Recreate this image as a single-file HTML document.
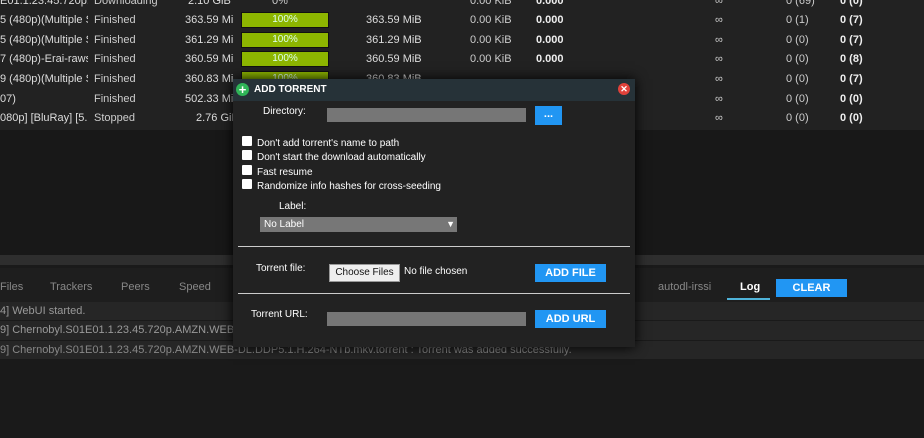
<!DOCTYPE html><html><head><style>
body{margin:0;width:924px;height:438px;overflow:hidden;background:#1a1a1a;font-family:"Liberation Sans",sans-serif;font-size:11px;color:#ccc;position:relative}
.a{position:absolute;white-space:nowrap}
.n{position:absolute;white-space:nowrap;left:0;width:88px;overflow:hidden;color:#ddd}
.bar{position:absolute;left:241px;width:86px;height:14px;background:#8db600;color:#dfe;text-align:center;line-height:14px;font-size:10px;border:1px solid #111}
.btn{position:absolute;background:#2196f3;color:#fff;font-weight:bold;text-align:center;font-size:11px}
.inp{position:absolute;background:#767676;height:14px}
.cb{position:absolute;width:10px;height:10px;background:#fff;border-radius:1px}
</style></head><body>
<div class="a" style="left:0;top:0;width:924px;height:130px;background:#222"></div>
<div class="a" style="left:0;top:130px;width:924px;height:125px;background:#181818"></div>
<div class="a" style="left:0;top:255px;width:924px;height:10px;background:#2e2e2e"></div>
<div class="a" style="left:0;top:268px;width:924px;height:34px;background:#1e1e1e"></div>
<div class="a" style="left:0;top:302px;width:924px;height:57px;background:#262626"></div>
<div class="a" style="left:0;top:320px;width:924px;height:1px;background:#1a1a1a"></div>
<div class="a" style="left:0;top:340px;width:924px;height:1px;background:#1a1a1a"></div>

<div class="n" style="top:-5px">E01.1.23.45.720p.Al</div><div class="a" style="left:94px;top:-5px">Downloading</div><div class="a" style="left:188px;top:-5px;color:#ddd">2.10 GiB</div><div class="a" style="left:272px;top:-5px">0%</div><div class="a" style="left:470px;top:-5px">0.00 KiB</div><div class="a" style="left:536px;top:-5px;font-weight:bold;color:#eee">0.000</div><div class="a" style="left:715px;top:-5px">∞</div><div class="a" style="left:786px;top:-5px">0 (69)</div><div class="a" style="left:840px;top:-5px;font-weight:bold;color:#eee">0 (0)</div>

<div class="n" style="top:14px">5 (480p)(Multiple Su</div><div class="a" style="left:94px;top:14px">Finished</div><div class="a" style="left:185px;top:14px;color:#ddd;width:48px;overflow:hidden">363.59 MiB</div><div class="bar" style="top:12px">100%</div><div class="a" style="left:366px;top:14px;color:#ddd">363.59 MiB</div><div class="a" style="left:470px;top:14px">0.00 KiB</div><div class="a" style="left:536px;top:14px;font-weight:bold;color:#eee">0.000</div><div class="a" style="left:715px;top:14px">∞</div><div class="a" style="left:786px;top:14px">0 (1)</div><div class="a" style="left:840px;top:14px;font-weight:bold;color:#eee">0 (7)</div>

<div class="n" style="top:34px">5 (480p)(Multiple Su</div><div class="a" style="left:94px;top:34px">Finished</div><div class="a" style="left:185px;top:34px;color:#ddd;width:48px;overflow:hidden">361.29 MiB</div><div class="bar" style="top:32px">100%</div><div class="a" style="left:366px;top:34px;color:#ddd">361.29 MiB</div><div class="a" style="left:470px;top:34px">0.00 KiB</div><div class="a" style="left:536px;top:34px;font-weight:bold;color:#eee">0.000</div><div class="a" style="left:715px;top:34px">∞</div><div class="a" style="left:786px;top:34px">0 (0)</div><div class="a" style="left:840px;top:34px;font-weight:bold;color:#eee">0 (7)</div>

<div class="n" style="top:53px">7 (480p)-Erai-raws[T</div><div class="a" style="left:94px;top:53px">Finished</div><div class="a" style="left:185px;top:53px;color:#ddd;width:48px;overflow:hidden">360.59 MiB</div><div class="bar" style="top:51px">100%</div><div class="a" style="left:366px;top:53px;color:#ddd">360.59 MiB</div><div class="a" style="left:470px;top:53px">0.00 KiB</div><div class="a" style="left:536px;top:53px;font-weight:bold;color:#eee">0.000</div><div class="a" style="left:715px;top:53px">∞</div><div class="a" style="left:786px;top:53px">0 (0)</div><div class="a" style="left:840px;top:53px;font-weight:bold;color:#eee">0 (8)</div>

<div class="n" style="top:73px">9 (480p)(Multiple Su</div><div class="a" style="left:94px;top:73px">Finished</div><div class="a" style="left:185px;top:73px;color:#ddd;width:48px;overflow:hidden">360.83 MiB</div><div class="bar" style="top:71px">100%</div><div class="a" style="left:366px;top:73px;color:#ddd">360.83 MiB</div><div class="a" style="left:715px;top:73px">∞</div><div class="a" style="left:786px;top:73px">0 (0)</div><div class="a" style="left:840px;top:73px;font-weight:bold;color:#eee">0 (7)</div>

<div class="n" style="top:93px">07)</div><div class="a" style="left:94px;top:93px">Finished</div><div class="a" style="left:185px;top:93px;color:#ddd">502.33 MiB</div><div class="a" style="left:715px;top:93px">∞</div><div class="a" style="left:786px;top:93px">0 (0)</div><div class="a" style="left:840px;top:93px;font-weight:bold;color:#eee">0 (0)</div>

<div class="n" style="top:112px">080p] [BluRay] [5.1]</div><div class="a" style="left:94px;top:112px">Stopped</div><div class="a" style="left:196px;top:112px;color:#ddd">2.76 GiB</div><div class="a" style="left:715px;top:112px">∞</div><div class="a" style="left:786px;top:112px">0 (0)</div><div class="a" style="left:840px;top:112px;font-weight:bold;color:#eee">0 (0)</div>

<div class="a" style="left:0;top:281px;color:#888">Files</div><div class="a" style="left:50px;top:281px;color:#888">Trackers</div><div class="a" style="left:121px;top:281px;color:#888">Peers</div><div class="a" style="left:179px;top:281px;color:#888">Speed</div>
<div class="a" style="left:658px;top:281px;color:#888">autodl-irssi</div>
<div class="a" style="left:740px;top:281px;color:#fff;font-weight:bold">Log</div>
<div class="a" style="left:727px;top:298px;width:43px;height:2px;background:#4fb3d9"></div>
<div class="btn" style="left:776px;top:279px;width:71px;height:18px;line-height:18px">CLEAR</div>
<div class="a" style="left:0;top:305px;color:#999">4] WebUI started.</div>
<div class="a" style="left:0;top:324px;color:#999">9] Chernobyl.S01E01.1.23.45.720p.AMZN.WEB-DL.DDP5.1.H.264-NTb.mkv.torrent : Torrent was added successfully.</div>
<div class="a" style="left:0;top:344px;color:#888">9] Chernobyl.S01E01.1.23.45.720p.AMZN.WEB-DL.DDP5.1.H.264-NTb.mkv.torrent : Torrent was added successfully.</div>

<div class="a" style="left:233px;top:79px;width:402px;height:268px;background:#222;box-shadow:0 0 12px #000"></div>
<div class="a" style="left:233px;top:79px;width:402px;height:22px;background:#263238"></div>
<div class="a" style="left:236px;top:83px;width:13px;height:13px;border-radius:50%;background:#2fb457;color:#fff;font-weight:bold;text-align:center;line-height:13px;font-size:13px">+</div>
<div class="a" style="left:254px;top:84px;color:#fff;font-weight:bold;font-size:10px">ADD TORRENT</div>
<div class="a" style="left:618px;top:83px;width:12px;height:12px;border-radius:50%;background:#e0413a;color:#fff;font-weight:bold;text-align:center;line-height:12px;font-size:9px">✕</div>
<div class="a" style="left:263px;top:106px;color:#fff;font-size:10px">Directory:</div>
<div class="inp" style="left:327px;top:108px;width:199px"></div>
<div class="btn" style="left:535px;top:106px;width:27px;height:19px;line-height:16px">...</div>
<div class="cb" style="left:242px;top:136px"></div><div class="a" style="left:257px;top:138px;color:#fff;font-size:10px">Don't add torrent's name to path</div>
<div class="cb" style="left:242px;top:150px"></div><div class="a" style="left:257px;top:152px;color:#fff;font-size:10px">Don't start the download automatically</div>
<div class="cb" style="left:242px;top:165px"></div><div class="a" style="left:257px;top:167px;color:#fff;font-size:10px">Fast resume</div>
<div class="cb" style="left:242px;top:179px"></div><div class="a" style="left:257px;top:181px;color:#fff;font-size:10px">Randomize info hashes for cross-seeding</div>
<div class="a" style="left:279px;top:201px;color:#fff;font-size:10px">Label:</div>
<div class="a" style="left:260px;top:217px;width:197px;height:15px;background:#777;color:#fff;font-size:10px;line-height:15px;text-indent:4px">No Label<span style="position:absolute;right:2px;font-size:9px">▼</span></div>
<div class="a" style="left:238px;top:246px;width:392px;height:1px;background:#ccc"></div>
<div class="a" style="left:256px;top:263px;color:#fff;font-size:10px">Torrent file:</div>
<div class="a" style="left:329px;top:264px;width:69px;height:16px;background:#efefef;color:#111;font-size:10px;line-height:16px;text-align:center;border:1px solid #999">Choose Files</div>
<div class="a" style="left:404px;top:266px;color:#fff;font-size:10px">No file chosen</div>
<div class="btn" style="left:535px;top:264px;width:71px;height:18px;line-height:18px">ADD FILE</div>
<div class="a" style="left:238px;top:293px;width:392px;height:1px;background:#ccc"></div>
<div class="a" style="left:251px;top:309px;color:#fff;font-size:10px">Torrent URL:</div>
<div class="inp" style="left:327px;top:312px;width:199px"></div>
<div class="btn" style="left:535px;top:310px;width:71px;height:18px;line-height:18px">ADD URL</div>
</body></html>
